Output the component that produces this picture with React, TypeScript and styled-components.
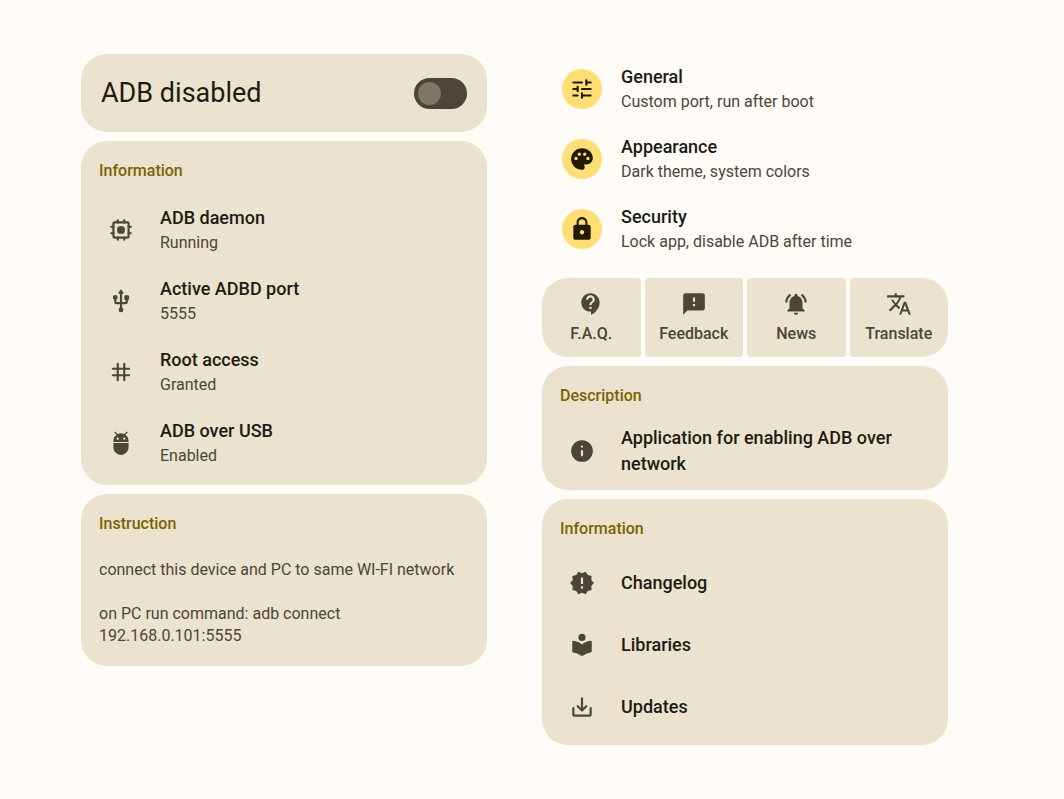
import React from 'react';
import styled, { createGlobalStyle, css } from 'styled-components';
import {
  MdAdb,
  MdContactSupport,
  MdFeedback,
  MdLock,
  MdNewReleases,
  MdNotificationsActive,
  MdPalette,
  MdTranslate,
} from 'react-icons/md';

const color = {
  background: '#fffcf7',
  card: '#ebe2cf',
  text: '#1e1b13',
  muted: '#4c4639',
  outline: '#7e7667',
  primary: '#7a6400',
  accent: '#ffdf75',
  onAccent: '#231b00',
};

const GlobalStyle = createGlobalStyle`
  *, *::before, *::after { box-sizing: border-box; }
  body {
    margin: 0;
    background: ${color.background};
    color: ${color.text};
    font-family: Roboto, "Liberation Sans", sans-serif;
  }
  h1, h2, p, ul { margin: 0; padding: 0; }
  ul { list-style: none; }
`;

const Page = styled.main`
  display: grid;
  grid-template-columns: minmax(0, 1fr) minmax(0, 1fr);
  align-items: start;
  gap: 55px;
  padding: 54px 116px 54px 81px;
`;

const Column = styled.div`
  display: flex;
  flex-direction: column;
  gap: 9px;
`;

const Card = styled.section`
  padding: 19px 0 7px;
  border-radius: 26px;
  background: ${color.card};
`;

const CardHeading = styled.h2`
  margin-bottom: 12px;
  padding: 0 18px;
  color: ${color.primary};
  font-size: 16px;
  font-weight: 500;
  line-height: 22px;
`;

const SwitchCard = styled.label`
  display: flex;
  align-items: center;
  justify-content: space-between;
  padding: 20px;
  border-radius: 26px;
  background: ${color.card};
  font-size: 27px;
  line-height: 38px;
  cursor: pointer;
`;

const Switch = styled.input`
  appearance: none;
  display: flex;
  align-items: center;
  width: 53px;
  height: 31px;
  margin: 0;
  padding: 0 4px;
  border-radius: 16px;
  background: ${color.muted};
  cursor: pointer;

  &::before {
    content: '';
    width: 23px;
    height: 23px;
    border-radius: 50%;
    background: ${color.outline};
  }

  &:checked {
    justify-content: flex-end;
    background: ${color.primary};
  }

  &:checked::before {
    background: ${color.accent};
  }
`;

type RowSize = 'double' | 'single' | 'wrapped' | 'setting';

const rowHeights: Record<RowSize, string> = {
  double: '71px',
  single: '62px',
  wrapped: '64px',
  setting: '70px',
};

const rowStyle = css<{ $size: RowSize }>`
  display: flex;
  align-items: center;
  gap: 19px;
  min-height: ${({ $size }) => rowHeights[$size]};
  padding: 0 20px;
  color: inherit;
  text-decoration: none;
`;

const Row = styled.li<{ $size: RowSize }>`
  ${rowStyle}
`;

const RowLink = styled.a<{ $size: RowSize }>`
  ${rowStyle}
`;

const IconSlot = styled.span<{ $filled?: boolean }>`
  display: grid;
  flex: none;
  place-items: center;
  width: 40px;
  height: 40px;
  border-radius: 50%;
  background: ${({ $filled }) => ($filled ? color.accent : 'transparent')};
  color: ${({ $filled }) => ($filled ? color.onAccent : color.muted)};

  svg {
    width: 26px;
    height: 26px;
  }
`;

const RowText = styled.span`
  display: flex;
  flex-direction: column;
  min-width: 0;
`;

const RowTitle = styled.span`
  font-size: 18px;
  font-weight: 500;
  line-height: 26px;
`;

const RowSubtitle = styled.span`
  color: ${color.muted};
  font-size: 16px;
  line-height: 24px;
`;

const Steps = styled.div`
  display: flex;
  flex-direction: column;
  gap: 22px;
  padding: 12px 18px;
  color: ${color.muted};
  font-size: 16px;
  line-height: 22px;
`;

const Settings = styled.ul`
  margin-bottom: 5px;
`;

const Tiles = styled.nav`
  display: grid;
  grid-template-columns: repeat(4, minmax(0, 1fr));
  gap: 4px;
`;

const Tile = styled.button`
  display: flex;
  flex-direction: column;
  align-items: center;
  gap: 6px;
  padding: 13px 0 12px;
  border: 0;
  border-radius: 4px;
  background: ${color.card};
  color: ${color.muted};
  font-family: inherit;
  font-size: 16px;
  font-weight: 500;
  line-height: 22px;
  cursor: pointer;

  &:first-child {
    border-top-left-radius: 26px;
    border-bottom-left-radius: 26px;
  }

  &:last-child {
    border-top-right-radius: 26px;
    border-bottom-right-radius: 26px;
  }

  svg {
    width: 26px;
    height: 26px;
  }
`;

const LineSvg = styled.svg.attrs({ viewBox: '0 0 24 24', 'aria-hidden': true })`
  fill: none;
  stroke: currentColor;
  stroke-width: 2;
  stroke-linecap: round;
  stroke-linejoin: round;
`;

const SolidSvg = styled.svg.attrs({ viewBox: '0 0 24 24', 'aria-hidden': true })`
  fill: currentColor;
`;

const ChipIcon = () => (
  <LineSvg>
    <rect x="5" y="5" width="14" height="14" rx="1" />
    <path d="M9 3v2M15 3v2M9 19v2M15 19v2M3 9h2M3 15h2M19 9h2M19 15h2" />
    <rect x="9" y="9" width="6" height="6" rx="1.6" fill="currentColor" strokeWidth="1" />
  </LineSvg>
);

const UsbIcon = () => (
  <LineSvg>
    <path d="M12 4v16M6.7 9v4a1 1 0 0 0 1 1h8.6a1 1 0 0 0 1-1V9" />
    <path d="M12 2l2 2.7h-4z" fill="currentColor" strokeWidth="1" />
    <circle cx="12" cy="20.2" r="1.7" fill="currentColor" strokeWidth="1" />
    <circle cx="6.7" cy="8.7" r="1.7" fill="currentColor" strokeWidth="1" />
    <rect x="15.6" y="7.1" width="3.4" height="3.4" rx=".6" fill="currentColor" strokeWidth="1" />
  </LineSvg>
);

const HashIcon = () => (
  <LineSvg>
    <path d="M9 4.5v15M15 4.5v15M4.500 9h15M4.500 15h15" />
  </LineSvg>
);

const TuneIcon = () => (
  <LineSvg>
    <path d="M4 6h8M16 4v4M16 6h4M4 12h4M8 10v4M12 12h8M4 18h4M12 16v4M12 18h8" />
  </LineSvg>
);

const InfoIcon = () => (
  <SolidSvg>
    <path
      fillRule="evenodd"
      d="M12 2a10 10 0 1 1 0 20 10 10 0 0 1 0-20zm0 9a1 1 0 0 0-1 1v4a1 1 0 0 0 2 0v-4a1 1 0 0 0-1-1zm0-4a1 1 0 1 0 0 2 1 1 0 0 0 0-2z"
    />
  </SolidSvg>
);

const ReaderIcon = () => (
  <SolidSvg>
    <circle cx="12" cy="5" r="3.3" />
    <path d="M12 11.55c-2.1-1.95-4.8-3.13-7.75-3.5C3.6 7.97 3 8.5 3 9.15v8.7c0 .55.4 1 .95 1.08 2.5.37 4.9 1.4 6.85 2.82.7.5 1.7.5 2.4 0 1.95-1.42 4.35-2.45 6.85-2.82.55-.08.95-.53.95-1.08v-8.7c0-.65-.6-1.18-1.25-1.1-2.95.37-5.65 1.55-7.75 3.5z" />
  </SolidSvg>
);

const DownloadIcon = () => (
  <LineSvg>
    <path d="M4 13v6a1 1 0 0 0 1 1h14a1 1 0 0 0 1-1v-6M12 4v11M8 11.3l4 4 4-4" />
  </LineSvg>
);

const statusItems = [
  { icon: <ChipIcon />, title: 'ADB daemon', value: 'Running' },
  { icon: <UsbIcon />, title: 'Active ADBD port', value: '5555' },
  { icon: <HashIcon />, title: 'Root access', value: 'Granted' },
  { icon: <MdAdb />, title: 'ADB over USB', value: 'Enabled' },
];

const settingItems = [
  { icon: <TuneIcon />, title: 'General', value: 'Custom port, run after boot' },
  { icon: <MdPalette />, title: 'Appearance', value: 'Dark theme, system colors' },
  { icon: <MdLock />, title: 'Security', value: 'Lock app, disable ADB after time' },
];

const tileItems = [
  { icon: <MdContactSupport />, label: 'F.A.Q.' },
  { icon: <MdFeedback />, label: 'Feedback' },
  { icon: <MdNotificationsActive />, label: 'News' },
  { icon: <MdTranslate />, label: 'Translate' },
];

const aboutItems = [
  { icon: <MdNewReleases />, title: 'Changelog' },
  { icon: <ReaderIcon />, title: 'Libraries' },
  { icon: <DownloadIcon />, title: 'Updates' },
];

interface RowContentProps {
  icon: React.ReactNode;
  title: string;
  value?: string;
  filled?: boolean;
}

const RowContent = ({ icon, title, value, filled }: RowContentProps) => (
  <>
    <IconSlot $filled={filled}>{icon}</IconSlot>
    <RowText>
      <RowTitle>{title}</RowTitle>
      {value && <RowSubtitle>{value}</RowSubtitle>}
    </RowText>
  </>
);

export default function App() {
  return (
    <>
      <GlobalStyle />
      <Page>
        <Column>
          <SwitchCard htmlFor="adb-switch">
            ADB disabled
            <Switch id="adb-switch" type="checkbox" role="switch" />
          </SwitchCard>

          <Card>
            <CardHeading>Information</CardHeading>
            <ul>
              {statusItems.map((item) => (
                <Row key={item.title} $size="double">
                  <RowContent {...item} />
                </Row>
              ))}
            </ul>
          </Card>

          <Card>
            <CardHeading>Instruction</CardHeading>
            <Steps>
              <p>connect this device and PC to same WI-FI network</p>
              <p>on PC run command: adb connect 192.168.0.101:5555</p>
            </Steps>
          </Card>
        </Column>

        <Column>
          <Settings>
            {settingItems.map((item) => (
              <li key={item.title}>
                <RowLink href="#" $size="setting">
                  <RowContent {...item} filled />
                </RowLink>
              </li>
            ))}
          </Settings>

          <Tiles>
            {tileItems.map((item) => (
              <Tile key={item.label} type="button">
                {item.icon}
                {item.label}
              </Tile>
            ))}
          </Tiles>

          <Card>
            <CardHeading>Description</CardHeading>
            <ul>
              <Row $size="wrapped">
                <RowContent icon={<InfoIcon />} title="Application for enabling ADB over network" />
              </Row>
            </ul>
          </Card>

          <Card>
            <CardHeading>Information</CardHeading>
            <ul>
              {aboutItems.map((item) => (
                <li key={item.title}>
                  <RowLink href="#" $size="single">
                    <RowContent {...item} />
                  </RowLink>
                </li>
              ))}
            </ul>
          </Card>
        </Column>
      </Page>
    </>
  );
}
